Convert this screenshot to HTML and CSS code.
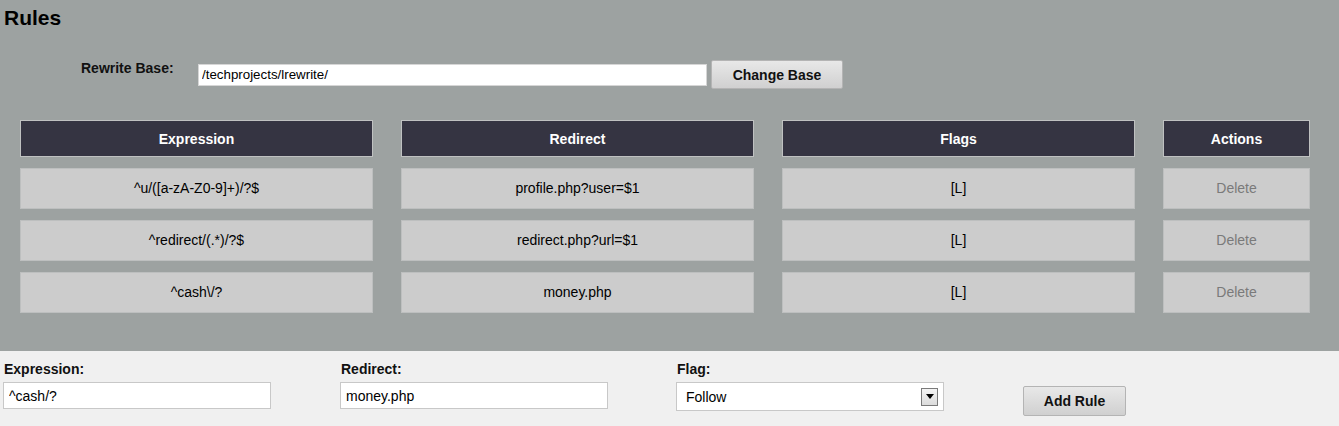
FILE: index.html
```html
<!DOCTYPE html>
<html>
<head>
<meta charset="utf-8">
<title>Rules</title>
<link rel="stylesheet" href="styles.css">
</head>
<body>
<div class="rules">
  <h1 class="title">Rules</h1>
  <div class="base-row">
    <label class="base-label">Rewrite Base:</label>
    <input class="base-input" type="text" value="/techprojects/lrewrite/">
    <button class="btn base-btn">Change Base</button>
  </div>
  <div class="grid">
    <div class="head">Expression</div>
    <div class="head">Redirect</div>
    <div class="head">Flags</div>
    <div class="head">Actions</div>

    <div class="cell">^u/([a-zA-Z0-9]+)/?$</div>
    <div class="cell">profile.php?user=$1</div>
    <div class="cell">[L]</div>
    <div class="cell del">Delete</div>

    <div class="cell">^redirect/(.*)/?$</div>
    <div class="cell">redirect.php?url=$1</div>
    <div class="cell">[L]</div>
    <div class="cell del">Delete</div>

    <div class="cell">^cash\/?</div>
    <div class="cell">money.php</div>
    <div class="cell">[L]</div>
    <div class="cell del">Delete</div>
  </div>
</div>
<div class="add-bar">
  <div class="field f1">
    <div class="flabel">Expression:</div>
    <input class="finput" type="text" value="^cash/?">
  </div>
  <div class="field f2">
    <div class="flabel">Redirect:</div>
    <input class="finput" type="text" value="money.php">
  </div>
  <div class="field f3">
    <div class="flabel">Flag:</div>
    <div class="fselect">
      <span class="fselect-text">Follow</span>
      <span class="fselect-arrow"><svg width="8" height="5" viewBox="0 0 8 5"><path d="M0 0H8L4 5Z" fill="#000"/></svg></span>
    </div>
  </div>
  <button class="btn add-btn">Add Rule</button>
</div>
</body>
</html>
```
FILE: styles.css
```css
* { box-sizing: border-box; }
html, body { margin: 0; padding: 0; }
body {
  font-family: "Liberation Sans", Arial, sans-serif;
  font-size: 14px;
  color: #000;
  background: #f0f0f0;
}
.rules {
  background: #9da2a1;
  height: 351px;
  padding-top: 6px;
}
.title {
  margin: 0;
  padding-left: 4px;
  font-size: 21px;
  line-height: 24px;
  font-weight: bold;
  color: #000;
}
.base-row {
  display: flex;
  align-items: center;
  height: 29px;
  margin-top: 30px;
  padding-left: 81px;
}
.base-label {
  align-self: flex-start;
  width: 117px;
  font-weight: bold;
  font-size: 14px;
  line-height: 16px;
  color: #111;
}
.base-input {
  width: 509px;
  height: 22px;
  margin: 0;
  padding: 0 3px;
  border: 1px solid #d6d6d6;
  background: #fff;
  font-family: "Liberation Sans", Arial, sans-serif;
  font-size: 13.333px;
  color: #000;
  outline: none;
}
.btn {
  font-family: "Liberation Sans", Arial, sans-serif;
  font-weight: bold;
  font-size: 14px;
  color: #111;
  border: 1px solid #b4b4b4;
  border-radius: 2px;
  background: linear-gradient(#e8e8e8, #d0d0d0);
  padding: 0;
  margin: 0;
}
.base-btn {
  width: 132px;
  height: 29px;
  margin-left: 4px;
}
.grid {
  display: grid;
  grid-template-columns: 353px 353px 353px 147px;
  grid-template-rows: 37px 41px 41px 41px;
  column-gap: 28px;
  row-gap: 11px;
  margin-top: 31px;
  padding-left: 20px;
}
.head {
  background: #353442;
  border: 1px solid #bfc1c1;
  color: #fff;
  font-weight: bold;
  display: flex;
  align-items: center;
  justify-content: center;
}
.cell {
  background: #cccccc;
  border: 1px solid #bdbfbf;
  display: flex;
  align-items: center;
  justify-content: center;
  padding-bottom: 2px;
  color: #000;
}
.cell.del { color: #7a7a7a; }
.add-bar {
  display: flex;
  align-items: flex-start;
  height: 75px;
  padding-top: 10px;
  padding-left: 3px;
}
.field { display: flex; flex-direction: column; }
.f1 { width: 337px; }
.f2 { width: 336px; }
.f3 { width: 347px; }
.flabel {
  font-weight: bold;
  line-height: 16px;
  color: #111;
  padding-left: 1px;
  margin-bottom: 5px;
}
.finput {
  width: 268px;
  height: 27px;
  margin: 0;
  padding: 0 5px;
  border: 1px solid #c8c8c8;
  background: #fff;
  font-family: "Liberation Sans", Arial, sans-serif;
  font-size: 14px;
  color: #000;
  outline: none;
}
.fselect {
  width: 268px;
  height: 29px;
  border: 1px solid #c8c8c8;
  background: #fff;
  display: flex;
  align-items: center;
  justify-content: space-between;
  padding: 0 5px 0 9px;
}
.fselect-text { font-size: 14px; color: #000; }
.fselect-arrow {
  width: 17px;
  height: 18px;
  border: 1px solid #7a7a7a;
  background: linear-gradient(#f4f4f4, #dcdcdc);
  display: flex;
  align-items: center;
  justify-content: center;
}
.fselect-arrow svg { display: block; }
.add-btn {
  width: 103px;
  height: 30px;
  margin-top: 25px;
}
```
